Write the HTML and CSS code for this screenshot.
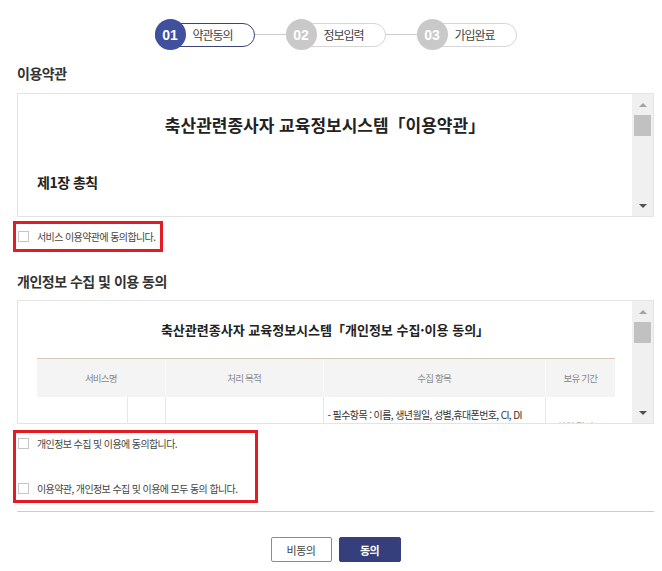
FILE: index.html
```
<!DOCTYPE html>
<html lang="ko">
<head>
    <meta charset="UTF-8">
    <meta name="viewport" content="width=device-width, initial-scale=1.0">
    <title>회원가입 - 약관동의</title>
    <link rel="stylesheet" href="styles.css">
</head>
<body>
    <div class="join-container">
        <div class="steps">
            <div class="step active">
                <span class="step-num">01</span>
                <span class="step-label">약관동의</span>
            </div>
            <div class="step-line"></div>
            <div class="step">
                <span class="step-num">02</span>
                <span class="step-label">정보입력</span>
            </div>
            <div class="step-line"></div>
            <div class="step">
                <span class="step-num">03</span>
                <span class="step-label">가입완료</span>
            </div>
        </div>

        <h2 class="section-title">이용약관</h2>
        <div class="terms-box">
            <div class="terms-content">
                <h3 class="terms-title">축산관련종사자 교육정보시스템「이용약관」</h3>
                <h4 class="terms-chapter">제1장 총칙</h4>
            </div>
            <div class="scrollbar">
                <span class="scroll-btn up"></span>
                <span class="scroll-thumb"></span>
                <span class="scroll-space"></span>
                <span class="scroll-btn down"></span>
            </div>
        </div>
        <div class="agree-group single">
            <label class="agree-row"><span class="check"></span>서비스 이용약관에 동의합니다.</label>
        </div>

        <h2 class="section-title second">개인정보 수집 및 이용 동의</h2>
        <div class="terms-box">
            <div class="terms-content">
                <h3 class="terms-title small">축산관련종사자 교육정보시스템「개인정보 수집·이용 동의」</h3>
                <table class="privacy-table">
                    <colgroup>
                        <col style="width: 90px">
                        <col style="width: 38px">
                        <col style="width: 158px">
                        <col style="width: 222px">
                        <col style="width: 70px">
                    </colgroup>
                    <thead>
                        <tr>
                            <th colspan="2">서비스명</th>
                            <th>처리 목적</th>
                            <th>수집 항목</th>
                            <th>보유 기간</th>
                        </tr>
                    </thead>
                    <tbody>
                        <tr>
                            <td></td>
                            <td></td>
                            <td></td>
                            <td class="items">- 필수항목 : 이름, 생년월일, 성별,휴대폰번호, CI, DI</td>
                            <td class="period">회원 탈퇴 시</td>
                        </tr>
                    </tbody>
                </table>
            </div>
            <div class="scrollbar">
                <span class="scroll-btn up"></span>
                <span class="scroll-thumb"></span>
                <span class="scroll-space"></span>
                <span class="scroll-btn down"></span>
            </div>
        </div>
        <div class="agree-group double">
            <label class="agree-row"><span class="check"></span>개인정보 수집 및 이용에 동의합니다.</label>
            <label class="agree-row"><span class="check"></span>이용약관, 개인정보 수집 및 이용에 모두 동의 합니다.</label>
        </div>

        <hr class="divider">

        <div class="button-container">
            <button class="btn">비동의</button>
            <button class="btn btn-primary">동의</button>
        </div>
    </div>
</body>
</html>
```

FILE: styles.css
```
body {
    margin: 0;
    font-family: "Noto Sans CJK KR", "Noto Sans", sans-serif;
    color: #333333;
    background-color: #ffffff;
}

.join-container {
    padding: 0 8px 0 17px;
}

/* steps */
.steps {
    display: flex;
    justify-content: center;
    align-items: center;
    height: 31px;
    margin-top: 19px;
}

.step {
    display: flex;
    align-items: center;
    box-sizing: border-box;
    width: 100px;
    height: 24px;
    border: 1px solid #d6d6d6;
    border-radius: 12px;
}

.step.active {
    border-color: #3b4575;
}

.step-num {
    flex-shrink: 0;
    display: flex;
    justify-content: center;
    align-items: center;
    width: 31px;
    height: 31px;
    margin-left: -1px;
    border-radius: 50%;
    background-color: #c9c9c9;
    color: #ffffff;
    font-family: "Liberation Sans", Arial, sans-serif;
    font-size: 14px;
    font-weight: bold;
}

.step.active .step-num {
    background-color: #3f509e;
}

.step-label {
    margin-left: 7px;
    font-size: 12px;
    letter-spacing: -1px;
    color: #444444;
}

.step-line {
    width: 31px;
    height: 1px;
    background-color: #cccccc;
}

/* sections */
.section-title {
    margin: 13px 0 0;
    font-size: 14px;
    line-height: 20px;
    letter-spacing: -0.5px;
    font-weight: bold;
    color: #333333;
}

.section-title.second {
    margin-top: 19px;
}

.terms-box {
    display: flex;
    box-sizing: border-box;
    height: 124px;
    margin-top: 10px;
    border: 1px solid #e4e4e4;
}

.section-title.second + .terms-box {
    margin-top: 9px;
}

.terms-content {
    flex: 1;
    overflow: hidden;
    padding-top: 18px;
}

.terms-title {
    margin: 0;
    text-align: center;
    font-size: 17px;
    line-height: 26px;
    font-weight: bold;
    color: #222222;
}

.terms-title.small {
    font-size: 13px;
    line-height: 22px;
}

.terms-chapter {
    margin: 34px 0 0 19px;
    font-size: 14px;
    line-height: 20px;
    letter-spacing: -0.5px;
    font-weight: bold;
    color: #222222;
}

/* fake scrollbar */
.scrollbar {
    display: flex;
    flex-direction: column;
    width: 21px;
    background-color: #f0f0f0;
}

.scroll-btn {
    display: flex;
    justify-content: center;
    align-items: center;
    height: 21px;
}

.scroll-btn::after {
    content: "";
    width: 0;
    height: 0;
    border-left: 4px solid transparent;
    border-right: 4px solid transparent;
}

.scroll-btn.up::after {
    border-bottom: 4px solid #a3a3a3;
}

.scroll-btn.down::after {
    border-top: 4px solid #505050;
}

.scroll-thumb {
    height: 21px;
    margin: 0 2px;
    background-color: #c1c1c1;
}

.scroll-space {
    flex: 1;
}

/* table */
.privacy-table {
    width: 578px;
    margin: 17px 0 0 19px;
    border-collapse: collapse;
    table-layout: fixed;
}

.privacy-table th {
    height: 38px;
    padding: 0;
    border-top: 1px solid #d2cab6;
    border-left: 1px solid #fafafa;
    background-color: #f4f4f4;
    font-size: 9.5px;
    letter-spacing: -0.8px;
    font-weight: normal;
    color: #888888;
}

.privacy-table th:first-child {
    border-left: none;
}

.privacy-table td {
    height: 40px;
    padding: 10px 4px 0;
    vertical-align: top;
    border-left: 1px solid #e6e6e6;
    font-size: 10px;
    letter-spacing: -0.6px;
    color: #333333;
}

.privacy-table td:first-child {
    border-left: none;
}

.privacy-table td.period {
    padding-top: 22px;
    text-align: center;
    color: #aaaaaa;
}

/* agree checks */
.agree-group {
    box-sizing: border-box;
    margin-left: -4px;
    border: 3px solid #e31b23;
}

.agree-group.single {
    width: 150px;
    margin-top: 4px;
    padding: 2px 0;
}

.agree-group.double {
    display: flex;
    flex-direction: column;
    gap: 24px;
    width: 245px;
    margin-top: 6px;
    padding: 0 0 1px;
}

.agree-row {
    display: flex;
    align-items: center;
    height: 21px;
    padding-left: 2px;
    font-size: 10px;
    letter-spacing: -0.6px;
    color: #444444;
}

.check {
    box-sizing: border-box;
    width: 11px;
    height: 11px;
    margin-right: 8px;
    border: 1px solid #c6c6c6;
    background-color: #ffffff;
}

.divider {
    margin: 8px 0 0;
    border: none;
    border-top: 1px solid #cccccc;
}

/* buttons */
.button-container {
    display: flex;
    justify-content: center;
    gap: 7px;
    margin-top: 25px;
}

.btn {
    box-sizing: border-box;
    width: 61px;
    height: 25px;
    padding: 0;
    border: 1px solid #8c8c8c;
    border-radius: 2px;
    background-color: #ffffff;
    font-family: "Noto Sans CJK KR", sans-serif;
    font-size: 11px;
    letter-spacing: -0.5px;
    color: #444444;
    cursor: pointer;
}

.btn-primary {
    width: 62px;
    border-color: #343f7c;
    background-color: #343f7c;
    color: #ffffff;
    font-weight: bold;
}
```
